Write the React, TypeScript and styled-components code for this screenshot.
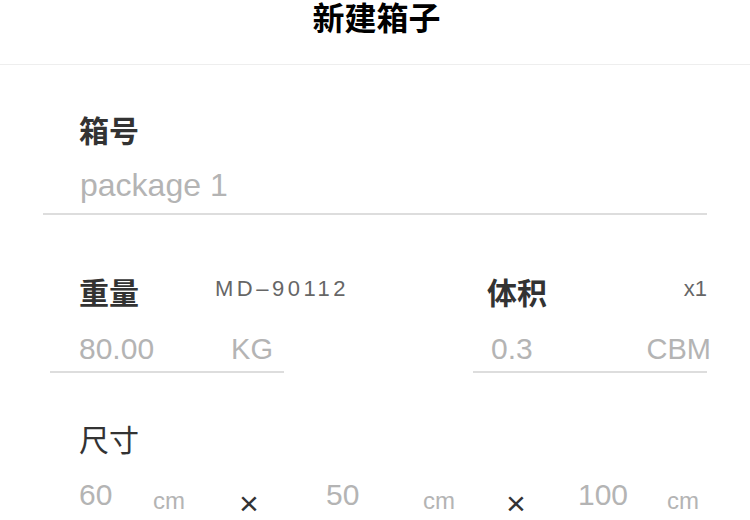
import React from 'react';
import styled, { createGlobalStyle } from 'styled-components';

const GlobalStyle = createGlobalStyle`
  body {
    margin: 0;
    background: #fff;
    font-family: "Liberation Sans", "Noto Sans CJK SC", sans-serif;
  }
`;

const Page = styled.div`
  width: 750px;
  height: 520px;
  overflow: hidden;
  background: #fff;
`;

const Header = styled.header`
  height: 64px;
  border-bottom: 1px solid #eee;
  display: flex;
  justify-content: center;
  align-items: flex-start;
`;

const Title = styled.h1`
  margin: 0;
  font-family: "Noto Sans CJK SC", sans-serif;
  font-size: 32px;
  line-height: 32px;
  font-weight: 700;
  color: #000;
  padding-left: 3px;
`;

const Section = styled.section<{ $top: number }>`
  margin-top: ${p => p.$top}px;
`;

const Label = styled.div<{ $light?: boolean }>`
  font-family: "Noto Sans CJK SC", sans-serif;
  font-size: 30px;
  line-height: 40px;
  font-weight: ${p => (p.$light ? 400 : 700)};
  color: #333;
  white-space: nowrap;
  flex-shrink: 0;
`;

const LabelRow = styled.div<{ $indent: number; $gap?: number }>`
  display: flex;
  align-items: center;
  justify-content: ${p => (p.$gap ? 'flex-start' : 'space-between')};
  gap: ${p => p.$gap ?? 0}px;
  padding-left: ${p => p.$indent}px;
`;

const Note = styled.span<{ $spacing?: number }>`
  font-size: 22px;
  letter-spacing: ${p => p.$spacing ?? 3.5}px;
  color: #666;
  margin-top: -4px;
  white-space: nowrap;
`;

const Field = styled.div<{ $indent: number; $right?: number; $bottom: number; $gap: number }>`
  display: flex;
  align-items: flex-start;
  justify-content: space-between;
  margin-top: ${p => p.$gap}px;
  padding: 0 ${p => p.$right ?? 0}px ${p => p.$bottom}px ${p => p.$indent}px;
  border-bottom: 2px solid #ddd;
`;

const Value = styled.span<{ $size?: number }>`
  font-size: ${p => p.$size ?? 30}px;
  line-height: 40px;
  color: #b4b4b4;
  white-space: nowrap;
`;

const Unit = styled.span<{ $small?: boolean }>`
  font-size: ${p => (p.$small ? 24 : 29)}px;
  line-height: 40px;
  padding-top: ${p => (p.$small ? 6 : 0)}px;
  color: #b4b4b4;
  white-space: nowrap;
`;

const NumberField = styled.div`
  margin-left: 43px;
  width: 664px;
`;

const TwoCols = styled.div`
  display: flex;
  justify-content: space-between;
  padding: 0 43px 0 50px;
`;

const Col = styled.div`
  width: 234px;
`;

const DimRow = styled.div`
  display: flex;
  align-items: flex-start;
  padding-left: 50px;
  margin-top: 17px;
`;

const DimCol = styled.div<{ $width: number }>`
  width: ${p => p.$width}px;
  flex-shrink: 0;
`;

const Times = styled.span<{ $pad: number; $width: number }>`
  width: ${p => p.$width}px;
  flex-shrink: 0;
  box-sizing: border-box;
  padding-left: ${p => p.$pad}px;
  padding-top: 8px;
  font-size: 34px;
  line-height: 40px;
  color: #333;
`;

const dims = [
  { value: '60', indent: 29, right: 2, width: 137 },
  { value: '50', indent: 3, right: 5, width: 137 },
  { value: '100', indent: 11, right: 4, width: 136 },
];

const separators = [
  { pad: 52, width: 136 },
  { pad: 46, width: 107 },
];

export default function App() {
  return (
    <Page>
      <GlobalStyle />
      <Header>
        <Title>新建箱子</Title>
      </Header>

      <Section $top={44}>
        <NumberField>
          <LabelRow $indent={36}>
            <Label>箱号</Label>
          </LabelRow>
          <Field $indent={37} $bottom={8} $gap={16}>
            <Value $size={32}>package 1</Value>
          </Field>
        </NumberField>
      </Section>

      <Section $top={56}>
        <TwoCols>
          <Col>
            <LabelRow $indent={29} $gap={76}>
              <Label>重量</Label>
              <Note>MD–90112</Note>
            </LabelRow>
            <Field $indent={29} $right={11} $bottom={2} $gap={18}>
              <Value>80.00</Value>
              <Unit>KG</Unit>
            </Field>
          </Col>
          <Col>
            <LabelRow $indent={14}>
              <Label>体积</Label>
              <Note $spacing={0}>x1</Note>
            </LabelRow>
            <Field $indent={18} $right={0} $bottom={2} $gap={18}>
              <Value>0.3</Value>
              <Unit style={{ marginRight: -4 }}>CBM</Unit>
            </Field>
          </Col>
        </TwoCols>
      </Section>

      <Section $top={45}>
        <LabelRow $indent={79}>
          <Label $light>尺寸</Label>
        </LabelRow>
        <DimRow>
          {dims.map((d, i) => (
            <React.Fragment key={d.value}>
              <DimCol $width={d.width}>
                <Field $indent={d.indent} $right={d.right} $bottom={1} $gap={0}>
                  <Value>{d.value}</Value>
                  <Unit $small>cm</Unit>
                </Field>
              </DimCol>
              {separators[i] && (
                <Times $pad={separators[i].pad} $width={separators[i].width}>×</Times>
              )}
            </React.Fragment>
          ))}
        </DimRow>
      </Section>
    </Page>
  );
}
